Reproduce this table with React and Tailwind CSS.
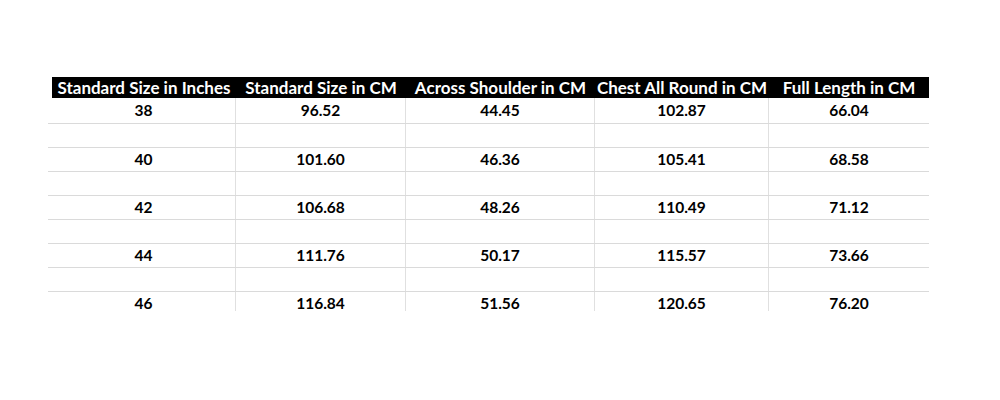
import React from "react";

const headers = [
  "Standard Size in Inches",
  "Standard Size in CM",
  "Across Shoulder in CM",
  "Chest All Round in CM",
  "Full Length in CM",
];

const data = [
  ["38", "96.52", "44.45", "102.87", "66.04"],
  ["40", "101.60", "46.36", "105.41", "68.58"],
  ["42", "106.68", "48.26", "110.49", "71.12"],
  ["44", "111.76", "50.17", "115.57", "73.66"],
  ["46", "116.84", "51.56", "120.65", "76.20"],
];

const rows = [];
data.forEach((r, i) => {
  rows.push(r);
  if (i < data.length - 1) rows.push(["", "", "", "", ""]);
});

export default function App() {
  return (
    <div
      className="w-[1000px] h-[400px] bg-white overflow-hidden"
      style={{ fontFamily: "Lato, 'Open Sans', sans-serif" }}
    >
      <div className="ml-[48px] mt-[77px] w-[881px] h-[234px] overflow-hidden">
        <div className="ml-[4px] grid grid-cols-[184px_170px_189px_174px_160px] h-[21px] bg-black text-white font-bold text-[17px] leading-[21px]">
          {headers.map((h) => (
            <div key={h} className="text-center whitespace-nowrap">
              {h}
            </div>
          ))}
        </div>
        {rows.map((r, i) => (
          <div
            key={i}
            className={`grid grid-cols-[188px_170px_189px_174px_160px] border-b border-[#dadada] text-[15.5px] font-bold text-black ${
              i === 0 ? "h-[26px] leading-[25px]" : "h-[24px] leading-[23px]"
            }`}
          >
            {r.map((c, j) => (
              <div
                key={j}
                className={`text-center ${j === 0 ? "pl-[4px]" : ""} ${
                  j < 4 ? "border-r border-[#e0e0e0]" : ""
                }`}
              >
                {c}
              </div>
            ))}
          </div>
        ))}
      </div>
    </div>
  );
}
